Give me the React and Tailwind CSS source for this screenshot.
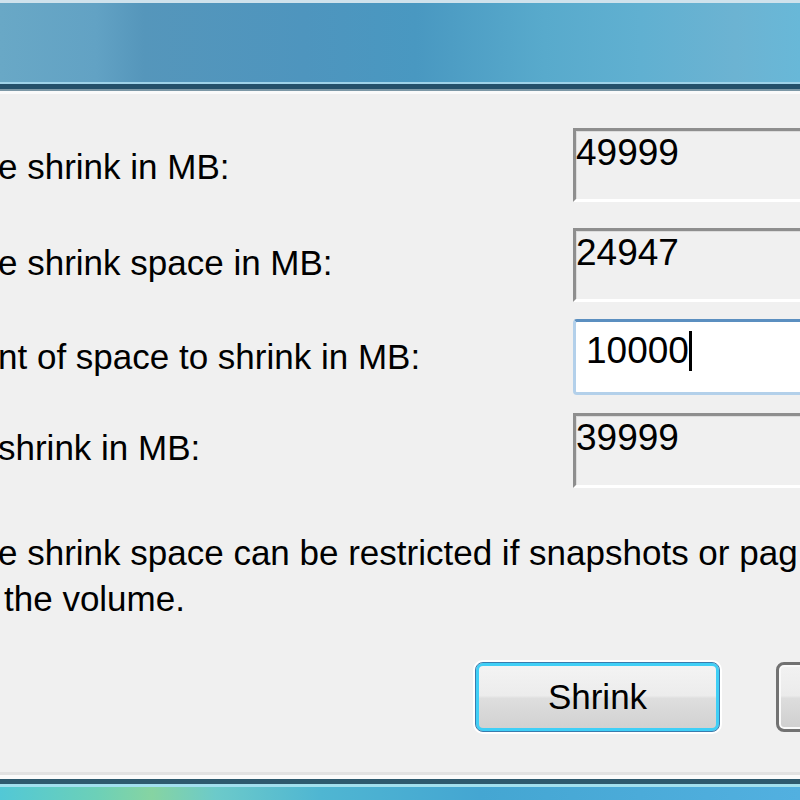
import React from "react";

const ReadOnlyBox = ({ value }) => (
  <div className="w-[260px] h-full shrink-0 border-[3px] border-t-[#8e8e8e] border-l-[#8e8e8e] border-b-white border-r-white bg-[#f0f0f0] shadow-[inset_1px_1px_0_#dcdcdc]">
    <div className="pt-[2px] text-[37px] leading-[40px] text-black">{value}</div>
  </div>
);

const Row = ({ label, mt, h, pt, children }) => (
  <div className={`flex items-start ${mt} ${h}`}>
    <div className={`w-[575px] shrink-0 -ml-[2px] ${pt} whitespace-nowrap text-[35px] leading-[40px] text-black`}>
      {label}
    </div>
    {children}
  </div>
);

export default function App() {
  return (
    <div className="w-[800px] h-[800px] overflow-hidden flex flex-col bg-[#f0f0f0] font-['Liberation_Sans',Arial,sans-serif]">
      {/* title bar */}
      <div className="h-[82px] border-t-[3px] border-[#cfe2ec] bg-[linear-gradient(to_right,#69a8c6_0%,#62a2c4_12%,#5596bb_18%,#4e95be_38%,#4998c1_52%,#58aacc_68%,#60b0d1_80%,#6cb3d2_92%,#68b8d8_100%)]" />
      <div className="h-[2px] bg-[#9fd2e8]" />
      <div className="h-[5px] bg-[#24506a]" />
      <div className="h-[2px] bg-[#7d98a6]" />
      <div className="h-[3px] bg-[#fafafa]" />

      {/* body */}
      <div className="flex-1 flex flex-col">
        <Row label="e shrink in MB:" mt="mt-[34px]" h="h-[74px]" pt="pt-[19px]">
          <ReadOnlyBox value="49999" />
        </Row>
        <Row label="e shrink space in MB:" mt="mt-[26px]" h="h-[74px]" pt="pt-[15px]">
          <ReadOnlyBox value="24947" />
        </Row>
        <Row label="nt of space to shrink in MB:" mt="mt-[17px]" h="h-[76px]" pt="pt-[18px]">
          <div className="w-[260px] h-full shrink-0 rounded-[4px] border-[3px] border-[#b3d0ea] border-t-[#5b8fc0] bg-white">
            <div className="flex items-center pt-[9px] pl-[10px] text-[37px] leading-[40px] text-black">
              <span>10000</span>
              <span className="w-[3px] h-[40px] bg-black" />
            </div>
          </div>
        </Row>
        <Row label="shrink in MB:" mt="mt-[18px]" h="h-[75px]" pt="pt-[15px]">
          <ReadOnlyBox value="39999" />
        </Row>

        <div className="mt-[42px] -ml-[2px] whitespace-nowrap text-[35px] leading-[46px] text-black">
          <div>e shrink space can be restricted if snapshots or pag</div>
          <div className="pl-[6px]">the volume.</div>
        </div>

        <div className="mt-[40px] flex pl-[475px] gap-[56px]">
          <button className="w-[245px] h-[70px] shrink-0 rounded-[8px] border border-[#3a7bad] shadow-[0_0_0_2px_#ffffff,inset_0_0_0_3px_#3fcff6] bg-[linear-gradient(to_bottom,#f4f4f4_0%,#ececec_48%,#dedede_52%,#d0d0d0_100%)] text-[35px] leading-[40px] text-black">
            Shrink
          </button>
          <button className="w-[245px] h-[70px] shrink-0 rounded-[8px] border-[3px] border-[#727272] shadow-[inset_0_0_0_2px_#fafafa] bg-[linear-gradient(to_bottom,#f2f2f2_0%,#ebebeb_48%,#dddddd_52%,#cfcfcf_100%)] text-[35px] leading-[40px] text-black">
            Cancel
          </button>
        </div>
      </div>

      {/* bottom frame */}
      <div className="h-[3px] bg-[#e2e2e2]" />
      <div className="h-[4px] bg-[#fbfbfb]" />
      <div className="h-[5px] bg-[#2e5a6e]" />
      <div className="h-[3px] bg-[#a3e0ee]" />
      <div className="h-[13px] bg-[linear-gradient(to_right,#52c8d6_0%,#6cd0b8_12%,#86d4a2_19%,#6ccaca_27%,#4fb6d2_40%,#44a6d2_60%,#52b0e0_100%)]" />
    </div>
  );
}
